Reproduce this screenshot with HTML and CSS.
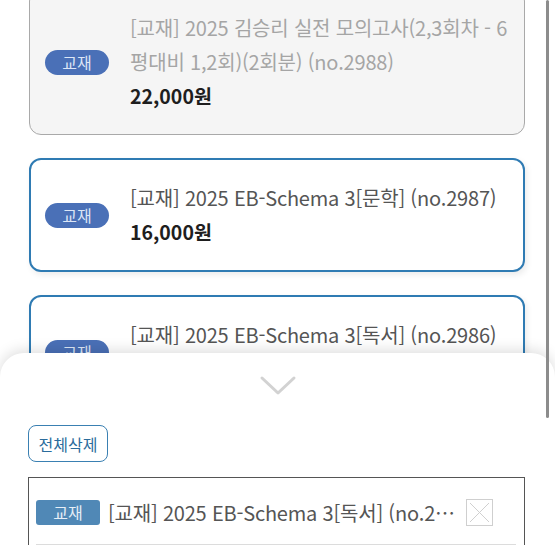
FILE: index.html
```html
<!DOCTYPE html>
<html lang="ko">
<head>
<meta charset="utf-8">
<link rel="stylesheet" href="styles.css">
</head>
<body>
<div class="page">
  <div class="list">
    <div class="card card-disabled">
      <span class="badge">교재</span>
      <div class="info">
        <div class="title">[교재] 2025 김승리 실전 모의고사(2,3회차 - 6 평대비 1,2회)(2회분) (no.2988)</div>
        <div class="price">22,000원</div>
      </div>
    </div>
    <div class="card card-active">
      <span class="badge">교재</span>
      <div class="info">
        <div class="title">[교재] 2025 EB-Schema 3[문학] (no.2987)</div>
        <div class="price">16,000원</div>
      </div>
    </div>
    <div class="card card-active">
      <span class="badge">교재</span>
      <div class="info">
        <div class="title">[교재] 2025 EB-Schema 3[독서] (no.2986)</div>
        <div class="price">16,000원</div>
      </div>
    </div>
  </div>

  <div class="sheet">
    <div class="handle">
      <svg width="40" height="22" viewBox="0 0 40 22"><polyline points="4,4 20,19 36,4" fill="none" stroke="#d2d2d2" stroke-width="3" stroke-linecap="round" stroke-linejoin="round"/></svg>
    </div>
    <div class="actions">
      <button class="clear-btn">전체삭제</button>
    </div>
    <div class="cart">
      <div class="cart-row">
        <span class="cart-badge">교재</span>
        <span class="cart-title">[교재] 2025 EB-Schema 3[독서] (no.2986)</span>
        <span class="remove">
          <svg width="27" height="27" viewBox="0 0 27 27"><rect x="0.5" y="0.5" width="26" height="26" fill="#fff" stroke="#cfcfcf"/><path d="M4 4 L23 23 M23 4 L4 23" stroke="#d0d0d0" stroke-width="1"/></svg>
        </span>
      </div>
      <div class="cart-divider"></div>
    </div>
  </div>

  <div class="scrollbar"></div>
</div>
</body>
</html>
```
FILE: styles.css
```css
* { box-sizing: border-box; }
html, body {
  margin: 0;
  padding: 0;
  background: #fff;
  overflow: hidden;
}
body {
  font-family: "Noto Sans CJK KR", "Noto Sans", sans-serif;
  width: 555px;
  height: 555px;
}
.page {
  position: relative;
  width: 555px;
  height: 555px;
  overflow: hidden;
}
.list {
  display: flex;
  flex-direction: column;
  gap: 23px;
  padding: 0 30px 0 29px;
  margin-top: -11px;
}
.card {
  display: flex;
  align-items: center;
  border-radius: 12px;
  padding: 21px 12px 21px 15px;
  gap: 21px;
}
.card-disabled {
  background: #f5f5f5;
  border: 1px solid #a9a9a9;
}
.card-active {
  background: #fff;
  border: 2px solid #2f7bb3;
  box-shadow: 2px 3px 6px rgba(0,0,0,0.08);
  padding-left: 14px;
}
.badge {
  flex: none;
  width: 64px;
  height: 25px;
  border-radius: 13px;
  background: #4a70b7;
  color: #dce6f6;
  font-size: 16px;
  line-height: 25px;
  text-align: center;
}
.info { flex: 1; min-width: 0; }
.title {
  font-size: 20px;
  line-height: 34px;
  color: #555;
  letter-spacing: -0.2px;
  word-break: keep-all;
}
.card-disabled .title { color: #a5a5a5; }
.price {
  font-size: 19.5px;
  line-height: 34px;
  font-weight: 700;
  color: #1e1e1e;
}
.sheet {
  position: absolute;
  left: 0;
  right: 0;
  top: 353px;
  bottom: 0;
  background: #fff;
  border-radius: 24px 24px 0 0;
  box-shadow: 0 -3px 14px rgba(0,0,0,0.13);
  padding: 0 30px 0 28px;
}
.handle {
  display: flex;
  justify-content: center;
  padding-top: 21px;
  height: 72px;
  padding-left: 2px;
}
.actions { display: flex; }
.clear-btn {
  font-family: inherit;
  font-size: 16px;
  color: #2b6c9c;
  background: #fff;
  border: 1.5px solid #3a80b2;
  border-radius: 8px;
  width: 80px;
  height: 37px;
  padding: 0;
  line-height: 1;
}
.cart {
  margin-top: 15px;
  border: 1.5px solid #555;
  border-bottom: none;
  padding: 0 8px 0 7px;
}
.cart-row {
  display: flex;
  align-items: center;
  height: 66px;
  padding-top: 2px;
}
.cart-badge {
  flex: none;
  width: 64px;
  height: 25px;
  border-radius: 3px;
  background: #5088b6;
  color: #e6eef7;
  font-size: 16px;
  line-height: 25px;
  text-align: center;
}
.cart-title {
  flex: 1;
  min-width: 0;
  margin-left: 8px;
  font-size: 20px;
  color: #555;
  white-space: nowrap;
  overflow: hidden;
  text-overflow: ellipsis;
  letter-spacing: -0.2px;
}
.remove {
  flex: none;
  display: flex;
  margin-left: 10px;
  margin-right: 23px;
}
.cart-divider {
  height: 1px;
  background: #dcdcdc;
}
.scrollbar {
  position: absolute;
  left: 546px;
  top: 0;
  width: 3px;
  height: 418px;
  background: #8c8c8c;
  border-radius: 2px;
}
```
